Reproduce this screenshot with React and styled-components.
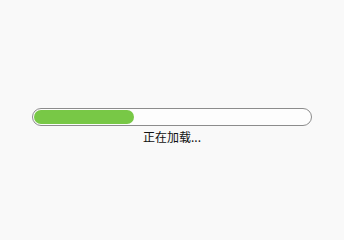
import styled, { createGlobalStyle } from "styled-components";

const Global = createGlobalStyle`
  html, body {
    margin: 0;
    padding: 0;
    background: #f9f9f9;
  }
  body {
    font-family: "Noto Sans CJK SC", "Liberation Sans", sans-serif;
  }
`

const Loader = styled.div`
  display: flex;
  flex-direction: column;
  align-items: center;
  padding-top: 108px;
  height: 226px;
  box-sizing: border-box;
`

const Track = styled.div`
  width: 280px;
  height: 18px;
  box-sizing: border-box;
  border: 1px solid #8c8c8c;
  border-radius: 9px;
  padding: 1px;
  background: #fdfdfd;
`

const Fill = styled.div`
  height: 100%;
  border-radius: 7px;
  background: #78c846;
`

const Label = styled.div`
  margin-top: 3px;
  font-size: 12px;
  line-height: 16px;
  color: #111;
`

const App = () => {
    const progress = 100 / 276
    return (
        <>
            <Global/>
            <Loader>
                <Track>
                    <Fill style={{ width: `${progress * 100}%` }}/>
                </Track>
                <Label>正在加载...</Label>
            </Loader>
        </>
    )
}

export default App;
